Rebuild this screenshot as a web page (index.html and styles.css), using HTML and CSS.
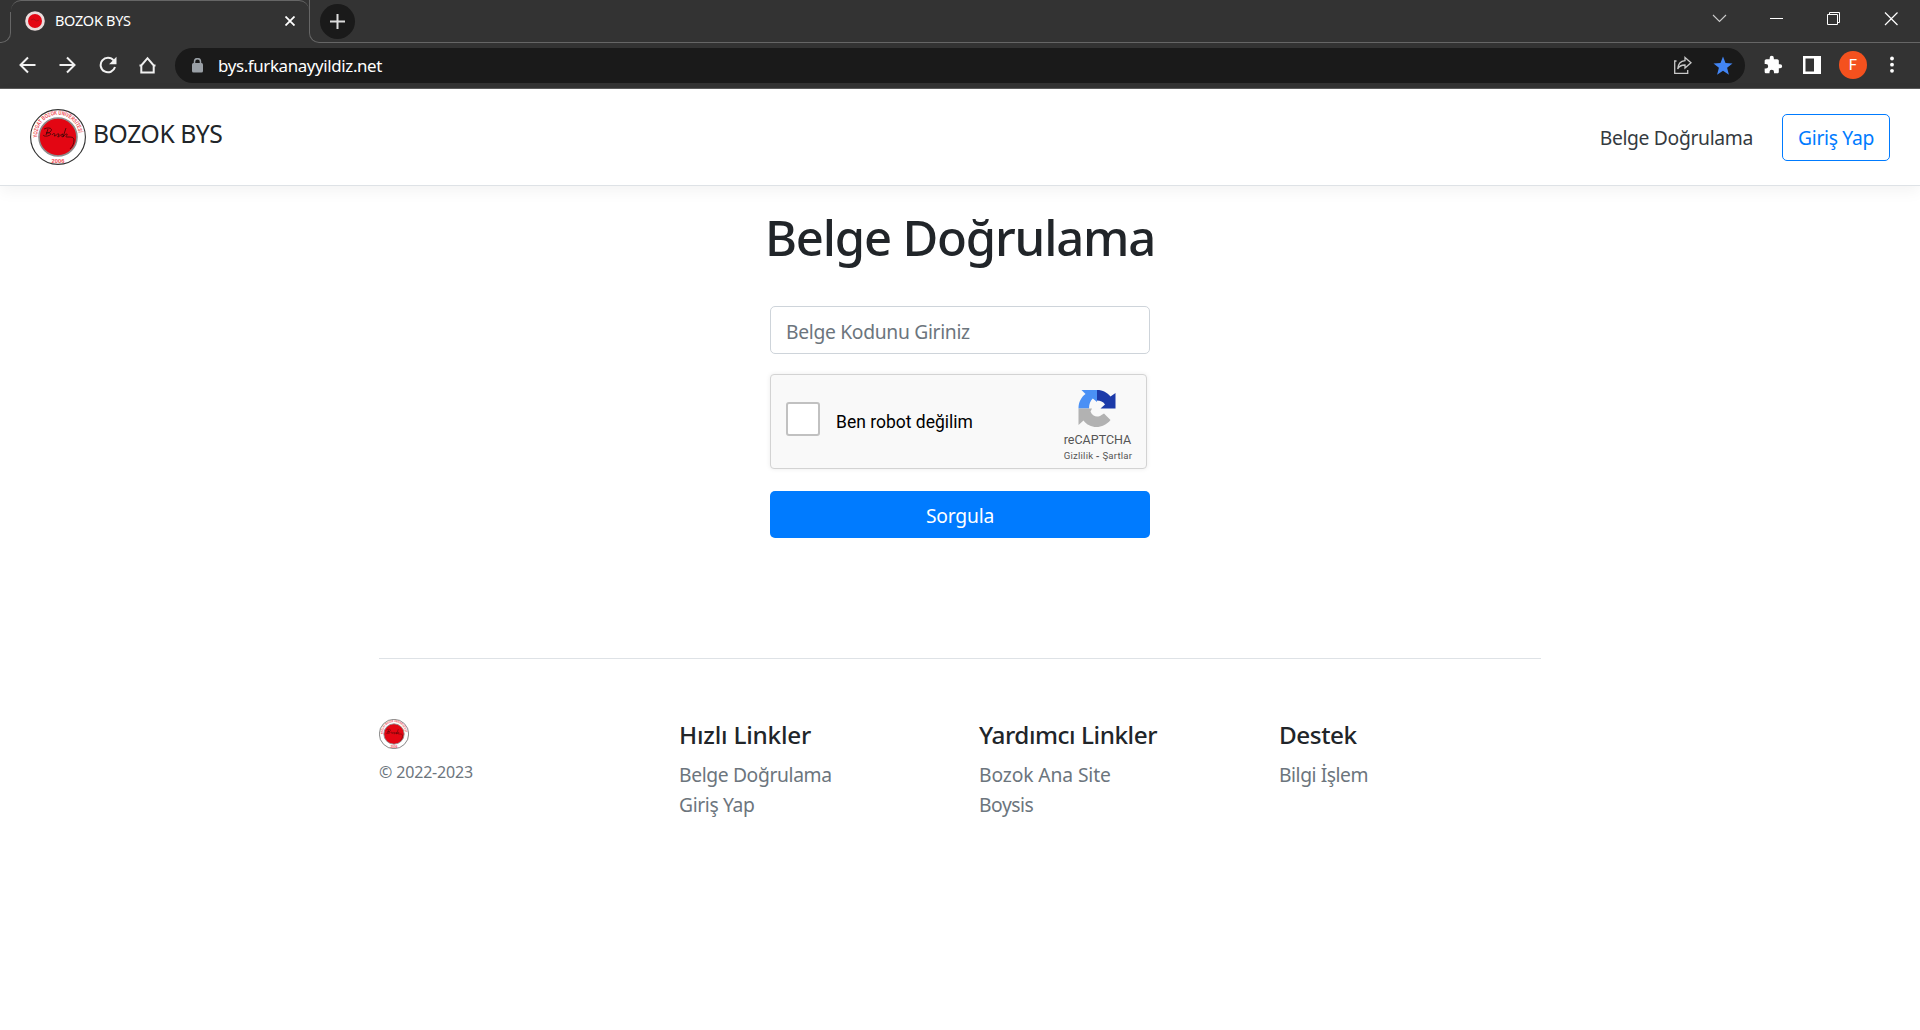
FILE: index.html
```html
<!DOCTYPE html>
<html lang="tr">
<head>
<meta charset="utf-8">
<title>BOZOK BYS</title>
<link rel="stylesheet" href="styles.css">
</head>
<body>
<div class="browser">
  <div class="tabs">
    <div class="edge-left"></div>
    <div class="tab">
      <svg class="favicon" viewBox="0 0 20 20"><circle cx="10" cy="10" r="9.8" fill="#e9dcdc"/><circle cx="10" cy="10" r="7" fill="#e30613"/><path d="M6 9q3-2 4 0t4 0" fill="none" stroke="#b50d16"/></svg>
      <span class="tab-title">BOZOK BYS</span>
      <svg class="tab-close" viewBox="0 0 10 10"><path d="M.5.5l9 9M9.500.5l-9 9" stroke="#fff" stroke-width="1.8"/></svg>
    </div>
    <div class="edge-right">
      <div class="new-tab"><svg width="15" height="15" viewBox="0 0 15 15"><path d="M7.500 0v15M0 7.500h15" stroke="#dcdcdc" stroke-width="2"/></svg></div>
      <svg class="win" width="190" height="16" viewBox="0 0 190 16" fill="none" stroke="#fff">
        <path d="M1 5l6.500 6.500L14 5" stroke="#ccc" stroke-width="1.1"/>
        <path d="M58 8.500h13"/>
        <path d="M115.500 4.500h10v10h-10zM117.500 4v-1.500h10v10H126"/>
        <path d="M173 2.500l12.500 12.500M185.500 2.500L173 15" stroke-width="1.200"/>
      </svg>
    </div>
  </div>
  <div class="toolbar">
    <svg class="nav-icons" width="138" height="18" viewBox="0 0 138 18" fill="none" stroke="#f1f1f1" stroke-width="2">
      <path d="M17.500 9H2.500M10 1.500L2.500 9l7.500 7.500"/>
      <path d="M41.500 9h15M49 1.500L56.500 9 49 16.500"/>
      <path d="M95.700 4.500A7.300 7.300 0 1 0 97 11"/><path d="M98.500.8v7.400h-7.400z" fill="#f1f1f1" stroke="none"/>
      <path d="M123.300 9v7.500h12.400V9M121.500 9.500h1.800l6.200-7.300 6.200 7.300h1.800"/>
    </svg>
    <div class="address">
      <svg class="lock" viewBox="0 0 12 15"><rect y="5" width="11" height="9.500" rx="1.500" fill="#9aa0a6"/><path d="M2.500 6V3.700a3 3 0 0 1 6 0V6" fill="none" stroke="#9aa0a6" stroke-width="1.500"/></svg>
      <span class="url">bys.furkanayyildiz.net</span>
      <svg class="share" viewBox="0 0 20 19" fill="none" stroke="#c8c8c8" stroke-width="1.300"><path d="M3.500 5H1.700v12.300h13V14"/><path d="M12 1.500l6 5.300-6 5.300V9C8.500 9 6 10 4.700 13c.3-4.500 3-8 7.300-8.400z"/></svg>
      <svg class="star" viewBox="0 0 20 19"><path d="M10 .5l2.500 6.400 7 .5-5.400 4.400 1.800 6.900L10 14.800l-5.900 3.900 1.800-6.900L.5 7.400l7-.5z" fill="#4285f4"/></svg>
    </div>
    <svg class="puzzle" viewBox="0 0 24 24"><path d="M20.500 11H19V7c0-1.100-.9-2-2-2h-4V3.500a2.500 2.500 0 0 0-5 0V5H4c-1.100 0-2 .9-2 2v3.800h1.500a2.700 2.700 0 0 1 0 5.400H2V20c0 1.100.9 2 2 2h3.800v-1.500a2.700 2.700 0 0 1 5.400 0V22H17c1.100 0 2-.9 2-2v-4h1.500a2.500 2.500 0 0 0 0-5z" fill="#fff"/></svg>
    <svg class="panel" viewBox="0 0 18 18"><path d="M0 0h18v18H0zM2.500 2.500v13H11v-13z" fill="#fff" fill-rule="evenodd"/></svg>
    <span class="avatar">F</span>
    <svg class="dots" viewBox="0 0 4 16" fill="#fff"><circle cx="2" cy="2" r="1.900"/><circle cx="2" cy="8.200" r="1.900"/><circle cx="2" cy="14.300" r="1.900"/></svg>
  </div>
</div>

<header class="site-header">
  <svg class="brand-logo" viewBox="0 0 56 56">
    <g id="seal">
      <circle cx="28" cy="28" r="27.4" fill="#fff" stroke="#333" stroke-width="1.1"/>
      <path id="arc" d="M7.400 28.500A20.700 20.700 0 1 1 48.600 28.500" fill="none"/>
      <text class="seal-text" textLength="64" lengthAdjust="spacingAndGlyphs"><textPath href="#arc">YOZGAT BOZOK ÜNİVERSİTESİ</textPath></text>
      <circle cx="28" cy="28" r="19" fill="#e30613" stroke="#8c8c8c" stroke-width="1.600"/>
      <path d="M14 20c4-2 9-1 7 2-1 2-4 2-5 2 4-1 6 1 4 2-3 2-8 1-6 0M18 20l-2 6M22 26c2-3 4-1 2 1 3 0 3-3 5-2 0 2-2 3-1 3s3-3 5-3c-3 3 0 4 1 1M36 19l-3 9c2-3 5-4 4-2s-2 2 1 2 6 0 6 3-1 6-4 9" fill="none" stroke="#3a0808" stroke-width=".8"/>
      <text class="seal-text" x="28" y="53.700" text-anchor="middle">2006</text>
    </g>
  </svg>
  <span class="brand">BOZOK BYS</span>
  <a class="nav-link">Belge Doğrulama</a>
  <a class="login">Giriş Yap</a>
</header>

<main class="verify">
  <h1>Belge Doğrulama</h1>
  <div class="code-input">Belge Kodunu Giriniz</div>
  <div class="captcha">
    <div class="check"></div>
    <span class="robot">Ben robot değilim</span>
    <div class="badge">
      <svg class="rc-logo" viewBox="0 0 38 39">
        <path d="M19 1v12l-4.200-3.500C12.500 11.500 11 15 11 19.500H.5C.5 13 3 8.500 7.500 5l-4-4z" fill="#4a90f5"/>
        <path d="M19 1c6 0 10 2.500 13.500 6.500l5-3.500v15.500h-15l4.500-4c-2-3-4.500-4-8-4z" fill="#1c3aa9"/>
        <path d="M.5 19.500H14l-1.500 3c2 5 7 6.500 11 3.500l2.500-1.500 6.500 6.500C25 40.500 11.500 40 5.500 31.500L.5 36z" fill="#b2b2b2"/>
      </svg>
      <span class="rc-name">reCAPTCHA</span>
      <span class="rc-links">Gizlilik <b>-</b> Şartlar</span>
    </div>
  </div>
  <button class="submit">Sorgula</button>
</main>

<footer class="site-footer">
  <div class="col">
    <svg class="foot-logo" viewBox="0 0 56 56"><use href="#seal"/></svg>
    <small class="copy">© 2022-2023</small>
  </div>
  <div class="col quick"><h5>Hızlı Linkler</h5><a>Belge Doğrulama</a><a>Giriş Yap</a></div>
  <div class="col helpful"><h5>Yardımcı Linkler</h5><a class="wide">Bozok Ana Site</a><a>Boysis</a></div>
  <div class="col"><h5>Destek</h5><a>Bilgi İşlem</a></div>
</footer>
</body>
</html>
```
FILE: styles.css
```css
* { box-sizing: border-box; }
body { margin: 0; background: #fff; color: #212529; font: 19.300px/30px "Noto Sans", "Open Sans", sans-serif; letter-spacing: -.33px; overflow: hidden; }
svg { display: block; flex: none; }
.seal-text { font: bold 5.800px "Liberation Sans", sans-serif; letter-spacing: 0; fill: #ee4a50; }

.browser { height: 89px; background: #333; border-bottom: 1px solid #5c5c5c; }
.tabs { display: flex; height: 43px; }
.edge-left { width: 11px; border-bottom: 1px solid #666; border-right: 1px solid #666; border-bottom-right-radius: 10px; margin-top: 12px; }
.tab { display: flex; align-items: center; width: 298px; border-top: 1px solid #666; border-radius: 10px 10px 0 0; padding: 0 14px 3px 14px; }
.favicon { width: 20px; height: 20px; }
.tab-title { margin: -2px 0 0 10px; color: #fff; font-size: 14.500px; line-height: 20px; letter-spacing: -.3px; }
.tab-close { width: 10px; height: 10px; margin-left: auto; }
.edge-right { display: flex; flex: 1; border-bottom: 1px solid #666; border-left: 1px solid #666; border-bottom-left-radius: 10px; }
.new-tab { display: grid; place-items: center; width: 35px; height: 35px; margin: 4px 0 0 10px; border-radius: 50%; background: #1a1a1a; }
.win { margin: 10px 18px 0 auto; }
.toolbar { display: flex; align-items: center; height: 45px; }
.nav-icons { margin: -1px 0 0 18px; }
.address { display: flex; align-items: center; width: 1570px; height: 35px; margin-left: 19px; border-radius: 18px; background: #1a1a1a; }
.lock { width: 12px; height: 15px; margin-left: 17px; }
.url { margin: 0 0 0 14px; color: #fff; font-size: 16.900px; line-height: 28px; letter-spacing: -.37px; }
.share { width: 20px; height: 19px; margin-left: auto; }
.star { width: 20px; height: 19px; margin: -1px 12px 0 20px; }
.puzzle { width: 20px; height: 20px; margin: -2px 0 0 18px; }
.panel { width: 18px; height: 18px; margin: -2px 0 0 20px; }
.avatar { display: grid; place-items: center; width: 28px; height: 28px; margin: -2px 0 0 18px; border-radius: 50%; background: #f4511e; color: #fff; font: 15px "Roboto", sans-serif; letter-spacing: 0; }
.dots { width: 4px; height: 17px; margin: -2px 0 0 23px; }

.site-header { display: flex; align-items: center; height: 97px; padding: 0 30px; border-bottom: 1px solid #dee2e6; box-shadow: 0 5px 15px rgba(0,0,0,.05); }
.brand-logo { width: 56px; height: 56px; }
.brand { margin: -6px auto 0 7px; font-size: 24.700px; font-weight: 370; letter-spacing: -.45px; }
.nav-link { margin: 2px 29px 0 0; color: #343a40; }
.login { width: 108px; height: 47px; border: 1px solid #007bff; border-radius: 5px; color: #007bff; line-height: 46px; text-align: center; }

.verify { display: flex; flex-direction: column; width: 380px; margin: 0 auto; }
h1 { display: flex; justify-content: center; margin: 21px 0 39px; font-size: 49px; line-height: 60px; font-weight: 540; letter-spacing: -1.180px; white-space: nowrap; }
.code-input { height: 48px; padding: 0 15px; border: 1px solid #ced4da; border-radius: 5px; color: #6c757d; line-height: 49px; letter-spacing: -.32px; }
.captcha { display: flex; width: 377px; height: 95px; margin-top: 20px; padding-left: 15px; border: 1px solid #d3d3d3; border-radius: 4px; background: #f9f9f9; box-shadow: 0 0 5px rgba(0,0,0,.08); letter-spacing: 0; }
.check { width: 34px; height: 34px; margin-top: 27px; border: 2px solid #c1c1c1; border-radius: 3px; background: #fff; }
.robot { margin: 32px auto 0 16px; color: #000; font: 17.500px/30px "Roboto", sans-serif; }
.badge { display: flex; flex-direction: column; align-items: center; width: 72px; margin-right: 12px; padding-top: 14px; color: #555; font-family: "Roboto", sans-serif; }
.rc-logo { width: 38px; height: 39px; margin-right: 2px; }
.rc-name { margin: 3px 1px 0 0; font-size: 12.500px; line-height: 18px; }
.rc-links { margin-top: 1px; font-size: 9.600px; line-height: 12px; letter-spacing: .2px; white-space: nowrap; }
.submit { height: 47px; margin-top: 22px; padding: 2px 0 0; border: 0; border-radius: 5px; background: #007bff; color: #fff; font: inherit; letter-spacing: -.2px; }

.site-footer { display: grid; grid-template-columns: repeat(4, 300px); width: 1162px; margin: 120px auto 0; padding-top: 60px; border-top: 1px solid #dee2e6; }
.col { display: flex; flex-direction: column; align-items: flex-start; color: #6c757d; letter-spacing: -.45px; }
.foot-logo { width: 30px; height: 30px; }
.copy { margin-top: 11px; font-size: 16px; line-height: 25px; letter-spacing: -.16px; }
h5 { margin: 1px 0 10px; color: #212529; font-size: 24.300px; line-height: 30px; font-weight: 500; letter-spacing: -.45px; }
.quick { letter-spacing: -.37px; }
.quick h5 { letter-spacing: -.22px; }
.wide { letter-spacing: -.12px; }
```
